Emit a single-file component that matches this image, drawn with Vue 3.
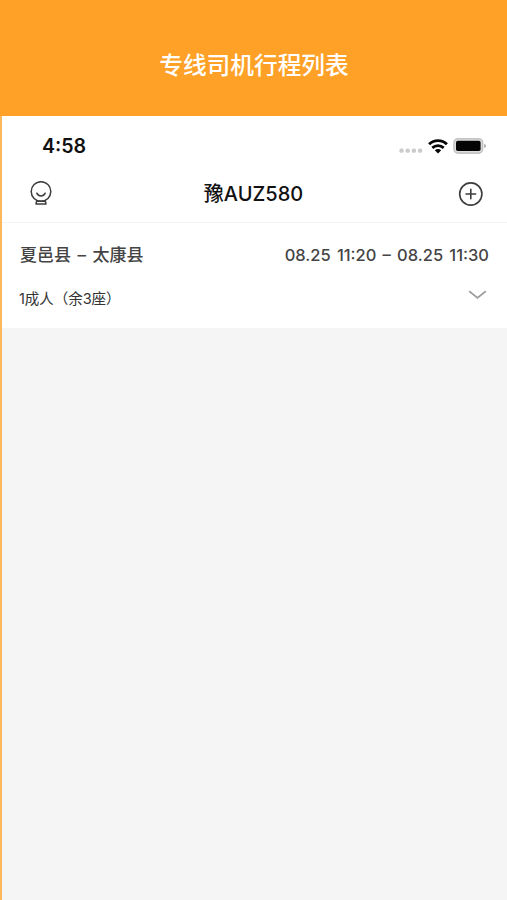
<script setup>
import { ref } from 'vue'

const heading = '专线司机行程列表'
const plate = '豫AUZ580'
const trips = ref([
  {
    route: '夏邑县 – 太康县',
    period: '08.25 11:20 – 08.25 11:30',
    seats: '1成人（余3座）',
  },
])
</script>

<template>
  <div class="page">
    <header class="banner"><h1>{{ heading }}</h1></header>
    <main class="phone">
      <div class="status">
        <span class="clock">4:58</span>
        <div class="indicators">
          <svg class="dots" width="24" height="6" viewBox="0 0 24 6">
            <g fill="#cbcbcb">
              <rect x="0.4" y="0.6" width="4.2" height="4.2" rx="1.6" />
              <rect x="6.6" y="0.6" width="4.2" height="4.2" rx="1.6" />
              <rect x="12.8" y="0.6" width="4.2" height="4.2" rx="1.6" />
              <rect x="19" y="0.6" width="4.2" height="4.2" rx="1.6" />
            </g>
          </svg>
          <svg class="wifi" width="20" height="15" viewBox="0 0 20 15">
            <g fill="none" stroke="#050505" stroke-width="2.9">
              <path d="M1.1 5.3C6.2 .4 13.8 .4 18.9 5.3" />
              <path d="M4.3 8.9C7.6 5.9 12.4 5.9 15.7 8.9" />
            </g>
            <path d="M6.8 11.2Q10 8.7 13.2 11.2L10 14.5Z" fill="#050505" />
          </svg>
          <svg class="battery" width="34" height="18" viewBox="0 0 34 18">
            <rect x="1" y="1.7" width="28.6" height="14.4" rx="4" fill="#dedede" stroke="#c4c4c4" stroke-width="1.6" />
            <rect x="3" y="3.8" width="24.6" height="10.3" rx="1.8" fill="#050505" />
            <path d="M31.2 6.7Q33 7.4 33 8.9T31.2 11.1Z" fill="#aaa" />
          </svg>
        </div>
      </div>

      <nav class="nav">
        <svg class="globe" width="24" height="26" viewBox="0 0 24 26">
          <g fill="none" stroke="#3d3d3d" stroke-width="1.5" stroke-linecap="round" stroke-linejoin="round">
            <circle cx="12" cy="10.5" r="9.8" />
            <path d="M7.8 12.2C9.7 16 14.3 16 16.2 12.2" />
            <path d="M7.8 19.5L7 22.9H17L16.2 19.5" />
            <path d="M8 20.2H16" />
          </g>
        </svg>
        <h2>{{ plate }}</h2>
        <svg class="add" width="26" height="26" viewBox="0 0 26 26">
          <g fill="none" stroke="#3d3d3d" stroke-width="1.6" stroke-linecap="round">
            <circle cx="12.8" cy="13" r="11.1" />
            <path d="M8 13H17.6M12.8 8.2V17.8" />
          </g>
        </svg>
      </nav>

      <section v-for="trip in trips" :key="trip.period" class="trip">
        <div class="line">
          <span class="route">{{ trip.route }}</span>
          <span class="period">{{ trip.period }}</span>
        </div>
        <div class="line second">
          <span class="seats">{{ trip.seats }}</span>
          <svg class="chevron" width="20" height="12" viewBox="0 0 20 12">
            <path d="M1.7 2.6L9.5 8.9L17.3 2.6" fill="none" stroke="#999" stroke-width="1.8" stroke-linecap="round" stroke-linejoin="round" />
          </svg>
        </div>
      </section>
    </main>
  </div>
</template>

<style>
body {
  margin: 0;
}
</style>

<style scoped>
.page {
  display: flex;
  flex-direction: column;
  box-sizing: border-box;
  height: 900px;
  overflow: hidden;
  background: #ffa126;
  font-family: Inter, "Noto Sans CJK SC", sans-serif;
  color: #333;
}
svg {
  display: block;
  flex: none;
}
.banner {
  display: flex;
  height: 116px;
  align-items: center;
  justify-content: center;
  box-sizing: border-box;
  padding: 15px 0 0 1px;
}
h1, h2 {
  margin: 0;
  white-space: nowrap;
}
h1 {
  font-size: 23.7px;
  font-weight: 500;
  line-height: 36px;
  color: #fff;
}
.phone {
  flex: 1;
  border-left: 2px solid #ffb95c;
  background: #f5f5f5;
}
.status {
  display: flex;
  justify-content: space-between;
  align-items: center;
  height: 60px;
  box-sizing: border-box;
  padding: 0 20px 0 40px;
  background: #fff;
}
.clock {
  font-size: 19.6px;
  font-weight: 600;
  line-height: 24px;
  color: #111;
}
.indicators {
  display: flex;
  align-items: center;
}
.dots {
  margin: 9px 5px 0 0;
}
.wifi {
  margin-right: 5px;
}
.nav {
  display: flex;
  align-items: center;
  justify-content: space-between;
  height: 47px;
  box-sizing: border-box;
  padding: 0 23px 11px 27px;
  border-bottom: 1px solid #f4f4f4;
  background: #fff;
}
h2 {
  margin-right: 4px;
  font-size: 20px;
  font-weight: 500;
  line-height: 28px;
  color: #111;
}
.trip {
  height: 105px;
  box-sizing: border-box;
  padding: 20px 18px 0;
  background: #fff;
}
.line {
  display: flex;
  align-items: center;
  justify-content: space-between;
  height: 24px;
  white-space: nowrap;
}
.second {
  margin-top: 19px;
}
.route, .period {
  font-size: 17px;
  line-height: 24px;
}
.route {
  font-weight: 500;
  color: #444;
  word-spacing: 2px;
}
.period {
  font-size: 16.5px;
  font-weight: 500;
  color: #444;
  word-spacing: 1.8px;
}
.seats {
  margin: -2px 0 0 -1px;
  font-size: 14.5px;
  letter-spacing: -0.05px;
}
.chevron {
  margin: -6px 1px 0 0;
}
</style>
